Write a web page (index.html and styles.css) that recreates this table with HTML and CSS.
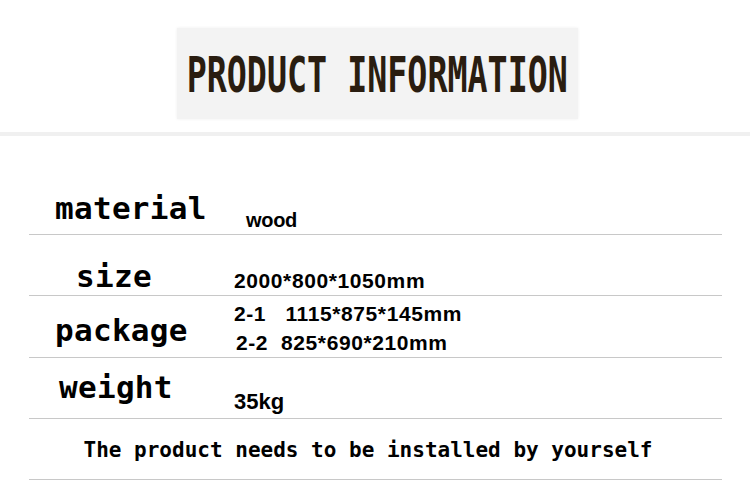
FILE: index.html
```html
<!DOCTYPE html>
<html lang="en">
<head>
<meta charset="utf-8">
<title>Product information</title>
<link rel="stylesheet" href="styles.css">
</head>
<body>
  <header class="hero">
    <div class="hero-box">
      <h1 class="hero-title">PRODUCT INFORMATION</h1>
    </div>
  </header>
  <div class="band"></div>
  <section class="specs">
    <div class="row row-material">
      <div class="label">material</div>
      <div class="value value-word">wood</div>
    </div>
    <div class="row row-size">
      <div class="label">size</div>
      <div class="value value-num">2000*800*1050mm</div>
    </div>
    <div class="row row-package">
      <div class="label">package</div>
      <div class="value value-num value-multi">
        <div class="pkg">2-1&nbsp;&nbsp;&nbsp;1115*875*145mm</div>
        <div class="pkg pkg-2">2-2&nbsp;&nbsp;825*690*210mm</div>
      </div>
    </div>
    <div class="row row-weight">
      <div class="label">weight</div>
      <div class="value">35kg</div>
    </div>
    <div class="row row-note">
      <p class="note">The product needs to be installed by yourself</p>
    </div>
  </section>
</body>
</html>
```

FILE: styles.css
```css
html, body {
  margin: 0;
  padding: 0;
  background: #ffffff;
}

body {
  width: 750px;
  height: 491px;
  overflow: hidden;
  font-family: "Liberation Sans", Arial, sans-serif;
  color: #000;
}

.hero {
  padding-top: 28px;
}

.hero-box {
  margin-left: 177px;
  width: 401px;
  height: 91px;
  box-sizing: border-box;
  padding-top: 4px;
  background: #f3f3f3;
  box-shadow: 0 0 3px rgba(0, 0, 0, 0.07);
  display: flex;
  align-items: center;
  justify-content: center;
}

.hero-title {
  margin: 0;
  font-family: "DejaVu Sans Mono", monospace;
  font-weight: bold;
  font-size: 49px;
  line-height: 1;
  color: #2a1d10;
  white-space: nowrap;
  transform: scaleX(0.68);
}

.band {
  margin-top: 13px;
  height: 4px;
  background: #f0f0f0;
}

.specs {
  margin-top: 38px;
  margin-left: 29px;
  width: 693px;
}

.row {
  display: flex;
  align-items: flex-start;
  height: 60px;
  border-bottom: 1px solid #c8c8c8;
}

.label {
  width: 205px;
  flex: none;
  box-sizing: border-box;
  padding-left: 26px;
  font-family: "DejaVu Sans Mono", monospace;
  font-weight: bold;
  font-size: 31px;
  line-height: 31px;
  letter-spacing: 0.3px;
}

.value {
  font-family: "Liberation Sans", Arial, sans-serif;
  font-weight: bold;
  font-size: 21px;
  line-height: 21px;
  white-space: nowrap;
}

.value-num {
  letter-spacing: 0.6px;
}

.value-word {
  font-size: 20px;
  line-height: 20px;
  letter-spacing: -0.3px;
}

.row-material .label { padding-top: 19px; }
.row-material .value { padding-top: 36px; padding-left: 12px; }

.row-size .label { padding-top: 26px; padding-left: 47px; }
.row-size .value { padding-top: 35px; }

.row-package { height: 61px; }
.row-package .label { padding-top: 19px; }
.value-multi {
  padding-top: 3px;
  line-height: 29px;
}
.pkg-2 { padding-left: 2px; }

.row-weight .label { padding-top: 14px; padding-left: 30px; }
.row-weight .value { padding-top: 33px; font-size: 22px; line-height: 22px; }

.row-note {
  justify-content: center;
}

.note {
  margin: 21px 0 0 -15px;
  font-family: "DejaVu Sans Mono", monospace;
  font-weight: bold;
  font-size: 21px;
  line-height: 21px;
  white-space: nowrap;
}
```
